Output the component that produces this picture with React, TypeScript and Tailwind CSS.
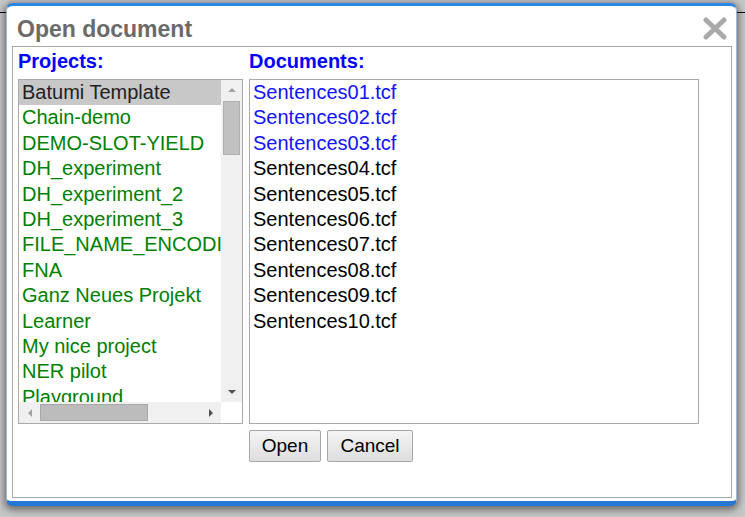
import React from "react";

const projects = [
  "Batumi Template",
  "Chain-demo",
  "DEMO-SLOT-YIELD",
  "DH_experiment",
  "DH_experiment_2",
  "DH_experiment_3",
  "FILE_NAME_ENCODING",
  "FNA",
  "Ganz Neues Projekt",
  "Learner",
  "My nice project",
  "NER pilot",
  "Playground",
];

const docs = Array.from({ length: 10 }, (_, i) => `Sentences${String(i + 1).padStart(2, "0")}.tcf`);

function Tri({ dir, color }: { dir: "up" | "down" | "left" | "right"; color: string }) {
  const pts =
    dir === "up"
      ? "0,4 4,0 8,4"
      : dir === "down"
      ? "0,0 8,0 4,4"
      : dir === "left"
      ? "4,0 4,8 0,4"
      : "0,0 0,8 4,4";
  const w = dir === "up" || dir === "down" ? 8 : 4;
  const h = dir === "up" || dir === "down" ? 4 : 8;
  return (
    <svg width={w} height={h} viewBox={`0 0 ${w} ${h}`}>
      <polygon points={pts} fill={color} />
    </svg>
  );
}

export default function App() {
  return (
    <div
      className="relative w-[745px] h-[517px] overflow-hidden bg-[#c6c6c6] pt-[3px] pl-[6px]"
      style={{ fontFamily: '"Liberation Sans", Arial, sans-serif' }}
    >
      <div className="absolute left-0 right-0 top-[12px] h-px bg-black" />
      <div className="relative w-[731px] h-[503px] rounded-[7px] border-t-[3px] border-b-[5px] border-x border-t-[#2a86e2] border-b-[#2577d6] border-x-[#9fb8d4] bg-white shadow-[0_2px_7px_2px_rgba(0,0,0,0.45)] flex flex-col">
        <div className="h-[40px] flex items-start justify-between pl-[10px] pr-[8px] pt-[10px]">
          <div className="text-[23px] leading-[26px] font-bold text-[#6a6a6a]">Open document</div>
          <svg width="26" height="23" viewBox="0 0 26 23" className="mt-[1px]">
            <path d="M4 3 L22 20 M22 3 L4 20" stroke="#a9a9a9" strokeWidth="5" strokeLinecap="round" />
          </svg>
        </div>
        <div className="ml-[5px] w-[720px] h-[452px] border border-[#aaaaaa] flex gap-[6px] pl-[5px] pt-[3px]">
          <div className="w-[225px] flex flex-col">
            <div className="text-[20px] leading-[23px] font-bold text-[#0000ff] mb-[6px]">Projects:</div>
            <div className="h-[345px] border border-[#aaaaaa] flex flex-col">
              <div className="flex flex-1 min-h-0">
                <div className="w-[202px] overflow-hidden">
                  {projects.map((p, i) => (
                    <div
                      key={p}
                      className={`h-[25.4px] leading-[25.4px] text-[20px] pl-[3px] whitespace-nowrap ${
                        i === 0 ? "bg-[#c8c8c8] text-[#222222]" : "text-[#008000]"
                      }`}
                    >
                      {p}
                    </div>
                  ))}
                </div>
                <div className="w-[21px] bg-[#f0f0f0] flex flex-col items-center">
                  <div className="h-[20px] flex items-center justify-center">
                    <Tri dir="up" color="#a3a3a3" />
                  </div>
                  <div className="w-[17px] h-[54px] mt-px bg-[#c1c1c1] border border-[#b0b0b0]" />
                  <div className="flex-1" />
                  <div className="h-[21px] flex items-center justify-center">
                    <Tri dir="down" color="#505050" />
                  </div>
                </div>
              </div>
              <div className="h-[21px] flex">
                <div className="w-[202px] bg-[#f0f0f0] flex items-center">
                  <div className="w-[21px] flex justify-center">
                    <Tri dir="left" color="#a3a3a3" />
                  </div>
                  <div className="w-[108px] h-[17px] bg-[#bcbcbc] border border-[#a8a8a8]" />
                  <div className="flex-1" />
                  <div className="w-[21px] flex justify-center">
                    <Tri dir="right" color="#505050" />
                  </div>
                </div>
                <div className="w-[21px] bg-white" />
              </div>
            </div>
          </div>
          <div className="w-[450px] flex flex-col">
            <div className="text-[20px] leading-[23px] font-bold text-[#0000ff] mb-[6px]">Documents:</div>
            <div className="h-[345px] border border-[#aaaaaa] overflow-hidden">
              {docs.map((d, i) => (
                <div
                  key={d}
                  className={`h-[25.4px] leading-[25.4px] text-[20px] pl-[3px] whitespace-nowrap ${
                    i < 3 ? "text-[#1212ff]" : "text-black"
                  }`}
                >
                  {d}
                </div>
              ))}
            </div>
            <div className="flex gap-[6px] mt-[6px]">
              <button className="w-[72px] h-[32px] border border-[#a6a6a6] rounded-[2px] bg-gradient-to-b from-[#f4f4f4] to-[#dedede] text-[19px] leading-[22px] text-black">
                Open
              </button>
              <button className="w-[86px] h-[32px] border border-[#a6a6a6] rounded-[2px] bg-gradient-to-b from-[#f4f4f4] to-[#dedede] text-[19px] leading-[22px] text-black">
                Cancel
              </button>
            </div>
          </div>
        </div>
      </div>
    </div>
  );
}
